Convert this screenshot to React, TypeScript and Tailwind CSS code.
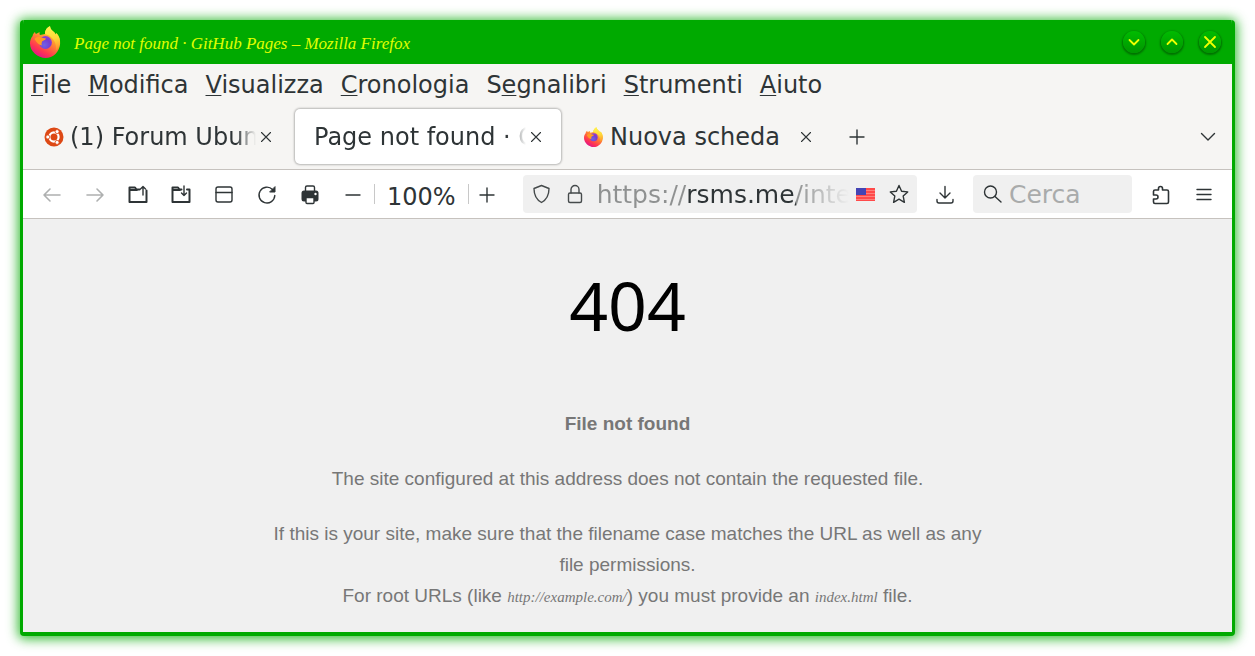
import { useId, type ReactNode } from "react";
import clsx from "clsx";

const menus = ["File", "Modifica", "Visualizza", "Cronologia", "Segnalibri", "Strumenti", "Aiuto"];
// position of the access key inside the label
const accessKeys: Record<string, number> = { Segnalibri: 1 };

function FirefoxLogo({ className }: { className?: string }) {
    const id = useId();
    return (
        <svg viewBox="0 0 32 32" className={className} aria-hidden="true">
            <defs>
                <linearGradient id={`${id}-body`} x1="26" y1="3" x2="9" y2="31" gradientUnits="userSpaceOnUse">
                    <stop offset="0" stopColor="#fff44f" />
                    <stop offset="0.3" stopColor="#ffb02e" />
                    <stop offset="0.55" stopColor="#ff7139" />
                    <stop offset="0.78" stopColor="#ff3750" />
                    <stop offset="1" stopColor="#e31587" />
                </linearGradient>
                <linearGradient id={`${id}-flame`} x1="20" y1="0" x2="24" y2="25" gradientUnits="userSpaceOnUse">
                    <stop offset="0" stopColor="#fff44f" />
                    <stop offset="0.5" stopColor="#ffd93a" />
                    <stop offset="1" stopColor="#ff8a2a" />
                </linearGradient>
                <radialGradient id={`${id}-globe`} cx="0.4" cy="0.7" r="0.8">
                    <stop offset="0" stopColor="#6d62e8" />
                    <stop offset="0.6" stopColor="#7a3bd0" />
                    <stop offset="1" stopColor="#a13bd8" />
                </radialGradient>
            </defs>
            <path
                fill={`url(#${id}-body)`}
                d="M5 6c.2 1 .5 1.600 1 2 1-.9 2.500-1.600 3.800-1.800C9.400 7 9.500 8.200 10 9l5-1c-.3-3.500 2-6.500 5-7.800.2 3 2.200 4 4.200 6l1.800 2.500.4-1.700c2.800 3 4 7 3.700 10.500C29.700 26 23 32 15.500 32S0 25.500 0 17.500C0 14.500 1 12 2.600 10 2.800 8.400 3.800 7 5 6z"
            />
            <path
                fill={`url(#${id}-flame)`}
                d="M20 .2c.2 3 2.200 4 4.200 6l1.800 2.500.4-1.700c2.800 3 4 7 3.400 10.500-.5 3-2 5.500-4 7 1-4-.3-11-6.800-15L15 8c-.3-3.500 2-6.500 5-7.800z"
            />
            <circle cx="15.500" cy="16.500" r="6.400" fill={`url(#${id}-globe)`} />
            <path fill="#ff9a24" d="M4.500 13c1.800-2.200 4.500-2.800 6.500-1.800 1.300.7 3.200.9 5 1.300-.2 1.700-3.700 2-4 3.300-.4 1.400-.7 2.200 0 3.700-3.500-.4-5.700-3.200-7.500-6.500z" />
        </svg>
    );
}

function UbuntuLogo() {
    return (
        <svg viewBox="0 0 20 20" className="size-5 shrink-0" aria-hidden="true">
            <circle cx="10" cy="10" r="9.500" fill="#dd4814" />
            <circle cx="10" cy="10" r="4.600" fill="none" stroke="#fff" strokeWidth="2.200" />
            <g fill="#fff" stroke="#dd4814" strokeWidth="0.8">
                <circle cx="3.800" cy="10" r="2" />
                <circle cx="13.100" cy="4.600" r="2" />
                <circle cx="13.100" cy="15.400" r="2" />
            </g>
        </svg>
    );
}

function Icon({ children, className, strokeWidth = 1.4 }: { children: ReactNode; className?: string; strokeWidth?: number }) {
    return (
        <svg
            viewBox="0 0 20 20"
            className={clsx("size-5 shrink-0", className)}
            fill="none"
            stroke="currentColor"
            strokeWidth={strokeWidth}
            strokeLinecap="round"
            strokeLinejoin="round"
            aria-hidden="true"
        >
            {children}
        </svg>
    );
}

function WindowButton({ label, d }: { label: string; d: string }) {
    return (
        <button
            aria-label={label}
            className="flex size-[22px] items-center justify-center rounded-full bg-linear-to-b from-[#00bc00] to-[#009600] text-[#f0ff00] shadow-[0_1px_2px_1px_#007000]"
        >
            <Icon strokeWidth={1.8}>
                <path d={d} />
            </Icon>
        </button>
    );
}

function ToolButton({ label, disabled, children }: { label: string; disabled?: boolean; children: ReactNode }) {
    return (
        <button aria-label={label} disabled={disabled} className="flex h-9 w-[43px] shrink-0 items-center justify-center pt-0.5 disabled:text-[#aeb0b0]">
            {children}
        </button>
    );
}

function Tab({ title, icon, active, faded }: { title: string; icon?: ReactNode; active?: boolean; faded?: boolean }) {
    return (
        <div
            className={clsx(
                "flex h-[55px] w-[266px] items-center rounded-[5px] pr-[15px] pl-[19px]",
                active && "bg-white shadow-[0_0_2px_1px_rgba(0,0,0,0.25)]"
            )}
        >
            <button role="tab" aria-selected={!!active} className="flex min-w-0 flex-1 items-center gap-1.5">
                {icon}
                <span
                    className={clsx(
                        "flex-1 overflow-hidden text-left whitespace-nowrap",
                        faded && "mask-[linear-gradient(to_left,transparent,black_20px)]"
                    )}
                >
                    {title}
                </span>
            </button>
            <button aria-label="Chiudi scheda" className="flex w-5 shrink-0 justify-center">
                <Icon strokeWidth={1.1}>
                    <path d="m5.500 5.500 9 9m0-9-9 9" />
                </Icon>
            </button>
        </div>
    );
}

function TitleBar() {
    return (
        <header className="flex h-11 shrink-0 items-center bg-[#00aa00] pr-[11px] pl-[7px]">
            <FirefoxLogo className="size-8 shrink-0" />
            <h1 className="ml-3 flex-1 truncate pt-1 font-['Z003','URW_Chancery_L','Liberation_Serif',serif] text-[17px] text-[#e1ff00] italic">
                Page not found · GitHub Pages – Mozilla Firefox
            </h1>
            <div className="flex gap-4">
                <WindowButton label="Riduci" d="m5.500 8 4.500 4.500L14.500 8" />
                <WindowButton label="Ingrandisci" d="m5.500 12 4.500-4.500 4.500 4.500" />
                <WindowButton label="Chiudi" d="m5 5 10 10m0-10L5 15" />
            </div>
        </header>
    );
}

function MenuBar() {
    return (
        <nav className="flex h-10 items-center gap-[17px] pt-0.5 pl-2">
            {menus.map((menu) => {
                const key = accessKeys[menu] ?? 0;
                return (
                    <button key={menu}>
                        {menu.slice(0, key)}
                        <span className="underline decoration-1 underline-offset-2">{menu[key]}</span>
                        {menu.slice(key + 1)}
                    </button>
                );
            })}
        </nav>
    );
}

function TabStrip() {
    return (
        <div className="flex h-[66px] items-center border-b border-[#c6c2be] pl-0.5">
            <div role="tablist" className="flex gap-1">
                <Tab title="(1) Forum Ubun" icon={<UbuntuLogo />} faded />
                <Tab title="Page not found · G" active faded />
                <Tab title="Nuova scheda" icon={<FirefoxLogo className="size-5 shrink-0" />} />
            </div>
            <button aria-label="Nuova scheda" className="ml-4">
                <Icon>
                    <path d="M3 10h14M10 3v14" />
                </Icon>
            </button>
            <button aria-label="Elenca tutte le schede" className="mr-3.5 ml-auto">
                <Icon>
                    <path d="m3.500 6.500 6.500 6.500 6.500-6.500" />
                </Icon>
            </button>
        </div>
    );
}

function Toolbar() {
    return (
        <div className="flex h-[49px] items-center border-b border-[#c6c2be] bg-white px-[7px]">
            <ToolButton label="Indietro" disabled>
                <Icon strokeWidth={1.6}>
                    <path d="M18 10H2m6-6-6 6 6 6" />
                </Icon>
            </ToolButton>
            <ToolButton label="Avanti" disabled>
                <Icon strokeWidth={1.6}>
                    <path d="M2 10h16m-6-6 6 6-6 6" />
                </Icon>
            </ToolButton>
            <ToolButton label="Apri">
                <Icon>
                    <path strokeWidth="2" d="M11.500 4.500h-3L7 2.500H1.500V17h17V5.500M2 5h7" />
                    <path d="M15 10V1.500M12.500 4 15 1.500 17.500 4" />
                </Icon>
            </ToolButton>
            <ToolButton label="Salva">
                <Icon>
                    <path strokeWidth="2" d="M10.500 4.500h-2L7 2.500H1.500V17h17V4.500H16M2 5h7" />
                    <path d="M13 1v9.500M10.500 8l2.500 2.500L15.500 8" />
                </Icon>
            </ToolButton>
            <ToolButton label="Finestra">
                <Icon>
                    <rect x="2" y="2" width="16" height="15" rx="2" />
                    <path d="M2 7.500h16" />
                </Icon>
            </ToolButton>
            <ToolButton label="Ricarica">
                <Icon>
                    <path d="M17.800 10.500A7.900 7.900 0 1 1 15.500 4.500" />
                    <path fill="currentColor" strokeWidth="1" d="M18 2v5h-5z" />
                </Icon>
            </ToolButton>
            <ToolButton label="Stampa">
                <Icon>
                    <path d="M5.500 6V2.500A1.500 1.500 0 0 1 7 1h6a1.500 1.500 0 0 1 1.500 1.500V6" />
                    <rect x="1.500" y="5.500" width="17" height="11" rx="2.500" fill="currentColor" stroke="none" />
                    <circle cx="15.500" cy="9" r="1.200" fill="#fff" stroke="none" />
                    <path fill="#fff" d="M6 12.500h8v5a1 1 0 0 1-1 1H7a1 1 0 0 1-1-1z" />
                </Icon>
            </ToolButton>
            <ToolButton label="Riduci zoom">
                <Icon>
                    <path d="M3 10h14" />
                </Icon>
            </ToolButton>
            <button className="flex h-5 shrink-0 items-center border-x border-[#c8c8c8] px-3 pt-1.5">100%</button>
            <button aria-label="Aumenta zoom" className="ml-2 shrink-0 pt-0.5">
                <Icon>
                    <path d="M3 10h14M10 3v14" />
                </Icon>
            </button>
            <div className="ml-[26px] flex h-[38px] min-w-0 flex-1 items-center rounded bg-[#f0f0f0] px-2 text-[25px] text-[#464b4c]">
                <Icon>
                    <path d="M10.500 1.500 18 4.500c0 6-2 11-7.500 14C5 15.500 3 10.500 3 4.500z" />
                </Icon>
                <Icon className="ml-3.5">
                    <rect x="3.500" y="9" width="13" height="9.500" rx="1.500" />
                    <path d="M6 9V5.500a4 4 0 0 1 8 0V9" />
                </Icon>
                <input
                    aria-label="Indirizzo"
                    defaultValue="https://rsms.me/inter/index"
                    className="ml-3 min-w-0 flex-1 bg-[linear-gradient(to_right,#8f9191_90px,#2e3436_90px,#2e3436_199px,#8f9191_199px,#f0f0f0_252px)] bg-clip-text pt-0.5 text-transparent outline-none"
                />
                <svg viewBox="0 0 19 13" className="ml-1.5 h-[13px] w-[19px] shrink-0" aria-hidden="true">
                    <path fill="#ff4a4a" d="M0 0h19v13H0z" />
                    <path stroke="#ff8d88" strokeWidth="0.8" d="M0 2.500h19M0 5.500h19M0 8.500h19M0 11.500h19" />
                    <path fill="#4444b4" d="M0 0h10v7H0z" />
                </svg>
                <Icon className="ml-3.5 text-[#2e3436]">
                    <path d="m10 1.500 2.600 5.700 6.100.7-4.500 4.200 1.200 6.200L10 15.200l-5.400 3.100 1.200-6.200L1.300 7.900l6.100-.7z" />
                </Icon>
            </div>
            <button aria-label="Download" className="flex w-14 shrink-0 justify-center pt-0.5">
                <Icon>
                    <path d="M10 1.500V13M5 8l5 5 5-5M2 14.500V16a2 2 0 0 0 2 2h12a2 2 0 0 0 2-2v-1.500" />
                </Icon>
            </button>
            <div className="mr-[7px] flex h-[38px] w-[159px] shrink-0 items-center rounded bg-[#f0f0f0] px-2.5 text-[25px]">
                <Icon>
                    <circle cx="7.500" cy="8" r="6" />
                    <path d="m12 12.500 6 5.500" />
                </Icon>
                <input aria-label="Cerca" placeholder="Cerca" className="ml-1.5 w-full min-w-0 pt-0.5 outline-none placeholder:text-[#a9abab]" />
            </div>
            <ToolButton label="Estensioni">
                <Icon strokeWidth={1.6}>
                    <path d="M7.500 5V3.500a2 2 0 0 1 4 0V5H16a1.500 1.500 0 0 1 1.500 1.500v10.500A1.500 1.500 0 0 1 16 18.500H4A1.500 1.500 0 0 1 2.500 17V14H5a2 2 0 0 0 0-4H2.500V6.500A1.500 1.500 0 0 1 4 5z" />
                </Icon>
            </ToolButton>
            <ToolButton label="Menu">
                <Icon>
                    <path d="M3 4.500h14M3 9.500h14M3 14.500h14" />
                </Icon>
            </ToolButton>
        </div>
    );
}

function Code({ children }: { children: ReactNode }) {
    return <code className="font-['Z003','URW_Chancery_L','Liberation_Serif',serif] text-[15px] italic">{children}</code>;
}

function NotFoundPage() {
    return (
        <main className="flex-1 bg-[#f0f0f0] px-6 text-center text-[19px] leading-[31px] text-[#777777]">
            <h2 className="pt-[46px] font-['Noto_Sans',sans-serif] text-[68px] leading-20 text-black">404</h2>
            <div className="mx-auto flex max-w-[730px] flex-col gap-6 pt-[63px] font-['Liberation_Sans',sans-serif]">
                <p>
                    <strong>File not found</strong>
                </p>
                <p>The site configured at this address does not contain the requested file.</p>
                <p>
                    If this is your site, make sure that the filename case matches the URL as well as any file permissions.
                    <br />
                    For root URLs (like <Code>http://example.com/</Code>) you must provide an <Code>index.html</Code> file.
                </p>
            </div>
        </main>
    );
}

export default function App() {
    return (
        <div className="flex min-h-screen bg-white p-5">
            <div className="flex min-w-0 flex-1 flex-col overflow-hidden rounded border-x-3 border-b-4 border-[#00aa00] bg-[#f6f5f3] font-['DejaVu_Sans',sans-serif] text-[24px] text-[#2e3436] shadow-[0_1px_12px_2px_rgba(0,170,0,0.8)]">
                <TitleBar />
                <MenuBar />
                <TabStrip />
                <Toolbar />
                <NotFoundPage />
            </div>
        </div>
    );
}
